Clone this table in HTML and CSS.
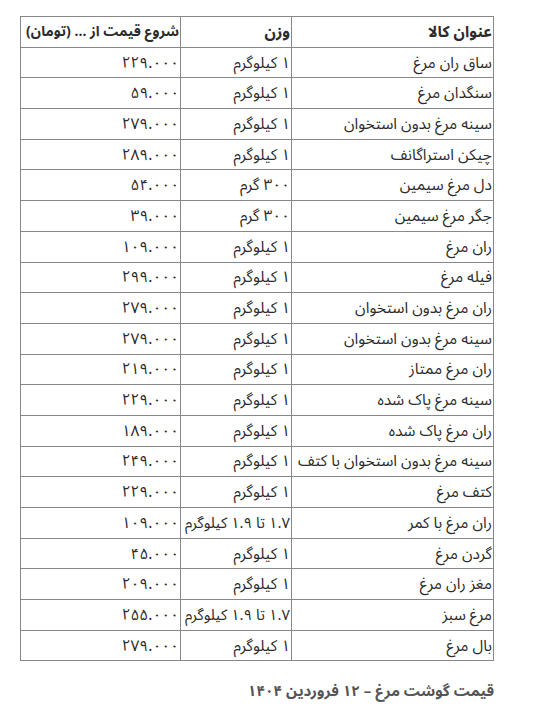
FILE: index.html
```html
<!DOCTYPE html>
<html lang="fa" dir="rtl">
<head>
<meta charset="utf-8">
<link rel="stylesheet" href="styles.css">
</head>
<body>
<div class="page">
<table class="price-table">
<thead>
<tr><th class="c-name">عنوان کالا</th><th class="c-weight">وزن</th><th class="c-price">شروع قیمت از ... (تومان)</th></tr>
</thead>
<tbody>
<tr><td>ساق ران مرغ</td><td>۱ کیلوگرم</td><td>۲۲۹.۰۰۰</td></tr>
<tr><td>سنگدان مرغ</td><td>۱ کیلوگرم</td><td>۵۹.۰۰۰</td></tr>
<tr><td>سینه مرغ بدون استخوان</td><td>۱ کیلوگرم</td><td>۲۷۹.۰۰۰</td></tr>
<tr><td>چیکن استراگانف</td><td>۱ کیلوگرم</td><td>۲۸۹.۰۰۰</td></tr>
<tr><td>دل مرغ سیمین</td><td>۳۰۰ گرم</td><td>۵۴.۰۰۰</td></tr>
<tr><td>جگر مرغ سیمین</td><td>۳۰۰ گرم</td><td>۳۹.۰۰۰</td></tr>
<tr><td>ران مرغ</td><td>۱ کیلوگرم</td><td>۱۰۹.۰۰۰</td></tr>
<tr><td>فیله مرغ</td><td>۱ کیلوگرم</td><td>۲۹۹.۰۰۰</td></tr>
<tr><td>ران مرغ بدون استخوان</td><td>۱ کیلوگرم</td><td>۲۷۹.۰۰۰</td></tr>
<tr><td>سینه مرغ بدون استخوان</td><td>۱ کیلوگرم</td><td>۲۷۹.۰۰۰</td></tr>
<tr><td>ران مرغ ممتاز</td><td>۱ کیلوگرم</td><td>۲۱۹.۰۰۰</td></tr>
<tr><td>سینه مرغ پاک شده</td><td>۱ کیلوگرم</td><td>۲۲۹.۰۰۰</td></tr>
<tr><td>ران مرغ پاک شده</td><td>۱ کیلوگرم</td><td>۱۸۹.۰۰۰</td></tr>
<tr><td>سینه مرغ بدون استخوان با کتف</td><td>۱ کیلوگرم</td><td>۲۴۹.۰۰۰</td></tr>
<tr><td>کتف مرغ</td><td>۱ کیلوگرم</td><td>۲۲۹.۰۰۰</td></tr>
<tr><td>ران مرغ با کمر</td><td class="tight">۱.۷ تا ۱.۹ کیلوگرم</td><td>۱۰۹.۰۰۰</td></tr>
<tr><td>گردن مرغ</td><td>۱ کیلوگرم</td><td>۴۵.۰۰۰</td></tr>
<tr><td>مغز ران مرغ</td><td>۱ کیلوگرم</td><td>۲۰۹.۰۰۰</td></tr>
<tr><td>مرغ سبز</td><td class="tight">۱.۷ تا ۱.۹ کیلوگرم</td><td>۲۵۵.۰۰۰</td></tr>
<tr><td>بال مرغ</td><td>۱ کیلوگرم</td><td>۲۷۹.۰۰۰</td></tr>
</tbody>
</table>
<p class="caption">قیمت گوشت مرغ – ۱۲ فروردین ۱۴۰۴</p>
</div>
</body>
</html>
```
FILE: styles.css
```css
html, body {
  margin: 0;
  padding: 0;
  background: #ffffff;
}
.page {
  padding: 16px 39px 0 24px;
  font-family: "Noto Sans Arabic", "DejaVu Sans", sans-serif;
  color: #2b2b2b;
}
.price-table {
  width: 470px;
  border-collapse: collapse;
  table-layout: fixed;
  font-size: 15.5px;
}
.price-table th,
.price-table td {
  border: 1px solid #888888;
  text-align: right;
  padding: 0 1px;
  height: 29.7px;
  line-height: 20px;
  white-space: nowrap;
  overflow: visible;
  font-weight: normal;
}
.price-table th {
  font-weight: bold;
}
.price-table th.c-price {
  font-size: 14px;
}
.price-table td.tight {
  font-size: 15px;
}
.c-name { width: 199px; }
.c-weight { width: 108px; }
.c-price { width: 157px; }
.caption {
  margin: 14px 0 0 0;
  text-align: right;
  font-weight: bold;
  font-size: 15px;
  color: #555555;
}
```
